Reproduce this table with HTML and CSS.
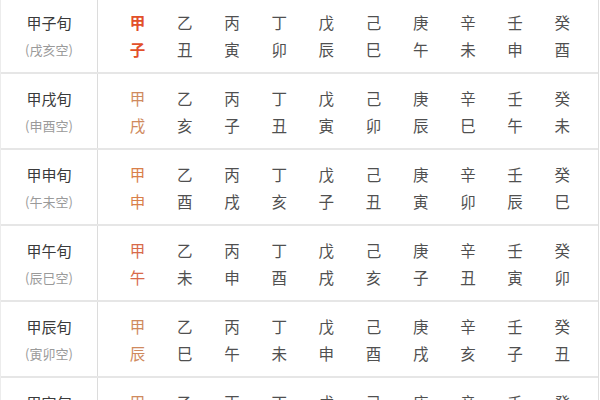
FILE: index.html
```html
<!DOCTYPE html>
<html>
<head>
<meta charset="utf-8">
<link rel="stylesheet" href="styles.css">
</head>
<body>
<div class="table">
  <div class="row">
    <div class="head"><div class="name">甲子旬</div><div class="void">(戌亥空)</div></div>
    <div class="cells">
      <div class="cell first strong"><span>甲</span><span>子</span></div>
      <div class="cell"><span>乙</span><span>丑</span></div>
      <div class="cell"><span>丙</span><span>寅</span></div>
      <div class="cell"><span>丁</span><span>卯</span></div>
      <div class="cell"><span>戊</span><span>辰</span></div>
      <div class="cell"><span>己</span><span>巳</span></div>
      <div class="cell"><span>庚</span><span>午</span></div>
      <div class="cell"><span>辛</span><span>未</span></div>
      <div class="cell"><span>壬</span><span>申</span></div>
      <div class="cell"><span>癸</span><span>酉</span></div>
    </div>
  </div>
  <div class="row">
    <div class="head"><div class="name">甲戌旬</div><div class="void">(申酉空)</div></div>
    <div class="cells">
      <div class="cell first"><span>甲</span><span>戌</span></div>
      <div class="cell"><span>乙</span><span>亥</span></div>
      <div class="cell"><span>丙</span><span>子</span></div>
      <div class="cell"><span>丁</span><span>丑</span></div>
      <div class="cell"><span>戊</span><span>寅</span></div>
      <div class="cell"><span>己</span><span>卯</span></div>
      <div class="cell"><span>庚</span><span>辰</span></div>
      <div class="cell"><span>辛</span><span>巳</span></div>
      <div class="cell"><span>壬</span><span>午</span></div>
      <div class="cell"><span>癸</span><span>未</span></div>
    </div>
  </div>
  <div class="row">
    <div class="head"><div class="name">甲申旬</div><div class="void">(午未空)</div></div>
    <div class="cells">
      <div class="cell first orange"><span>甲</span><span>申</span></div>
      <div class="cell"><span>乙</span><span>酉</span></div>
      <div class="cell"><span>丙</span><span>戌</span></div>
      <div class="cell"><span>丁</span><span>亥</span></div>
      <div class="cell"><span>戊</span><span>子</span></div>
      <div class="cell"><span>己</span><span>丑</span></div>
      <div class="cell"><span>庚</span><span>寅</span></div>
      <div class="cell"><span>辛</span><span>卯</span></div>
      <div class="cell"><span>壬</span><span>辰</span></div>
      <div class="cell"><span>癸</span><span>巳</span></div>
    </div>
  </div>
  <div class="row">
    <div class="head"><div class="name">甲午旬</div><div class="void">(辰巳空)</div></div>
    <div class="cells">
      <div class="cell first red"><span>甲</span><span>午</span></div>
      <div class="cell"><span>乙</span><span>未</span></div>
      <div class="cell"><span>丙</span><span>申</span></div>
      <div class="cell"><span>丁</span><span>酉</span></div>
      <div class="cell"><span>戊</span><span>戌</span></div>
      <div class="cell"><span>己</span><span>亥</span></div>
      <div class="cell"><span>庚</span><span>子</span></div>
      <div class="cell"><span>辛</span><span>丑</span></div>
      <div class="cell"><span>壬</span><span>寅</span></div>
      <div class="cell"><span>癸</span><span>卯</span></div>
    </div>
  </div>
  <div class="row">
    <div class="head"><div class="name">甲辰旬</div><div class="void">(寅卯空)</div></div>
    <div class="cells">
      <div class="cell first"><span>甲</span><span>辰</span></div>
      <div class="cell"><span>乙</span><span>巳</span></div>
      <div class="cell"><span>丙</span><span>午</span></div>
      <div class="cell"><span>丁</span><span>未</span></div>
      <div class="cell"><span>戊</span><span>申</span></div>
      <div class="cell"><span>己</span><span>酉</span></div>
      <div class="cell"><span>庚</span><span>戌</span></div>
      <div class="cell"><span>辛</span><span>亥</span></div>
      <div class="cell"><span>壬</span><span>子</span></div>
      <div class="cell"><span>癸</span><span>丑</span></div>
    </div>
  </div>
  <div class="row">
    <div class="head"><div class="name">甲寅旬</div><div class="void">(子丑空)</div></div>
    <div class="cells">
      <div class="cell first"><span>甲</span><span>寅</span></div>
      <div class="cell"><span>乙</span><span>卯</span></div>
      <div class="cell"><span>丙</span><span>辰</span></div>
      <div class="cell"><span>丁</span><span>巳</span></div>
      <div class="cell"><span>戊</span><span>午</span></div>
      <div class="cell"><span>己</span><span>未</span></div>
      <div class="cell"><span>庚</span><span>申</span></div>
      <div class="cell"><span>辛</span><span>酉</span></div>
      <div class="cell"><span>壬</span><span>戌</span></div>
      <div class="cell"><span>癸</span><span>亥</span></div>
    </div>
  </div>
</div>
</body>
</html>
```

FILE: styles.css
```css
html, body {
  margin: 0;
  padding: 0;
  background: #ffffff;
  overflow: hidden;
}
body {
  font-family: "Noto Sans CJK SC", "Noto Sans", sans-serif;
  color: #444;
}
.table {
  width: 597px;
  margin-top: -2px;
  border-left: 1px solid #ececec;
  border-right: 1px solid #dedede;
}
.row {
  display: flex;
  height: 74px;
  border-bottom: 2px solid #e6e6e6;
}
.head {
  width: 96px;
  border-right: 1px solid #dcdcdc;
  display: flex;
  flex-direction: column;
  align-items: center;
  justify-content: center;
  padding-top: 1px;
}
.name {
  font-size: 15px;
  line-height: 27px;
  color: #3a3a3a;
}
.void {
  font-size: 13px;
  line-height: 27px;
  color: #9a9a9a;
}
.cells {
  display: grid;
  grid-template-columns: repeat(10, 47.2px);
  padding-left: 16px;
  align-content: center;
  padding-top: 1px;
}
.cell {
  display: flex;
  flex-direction: column;
  align-items: center;
  font-size: 15.5px;
  line-height: 27px;
  color: #505050;
}
.first {
  color: #cf8a5e;
}
.strong {
  color: #e2502a;
  font-weight: bold;
}
.orange {
  color: #d97f4a;
}
.red {
  color: #d86a4a;
}
```
